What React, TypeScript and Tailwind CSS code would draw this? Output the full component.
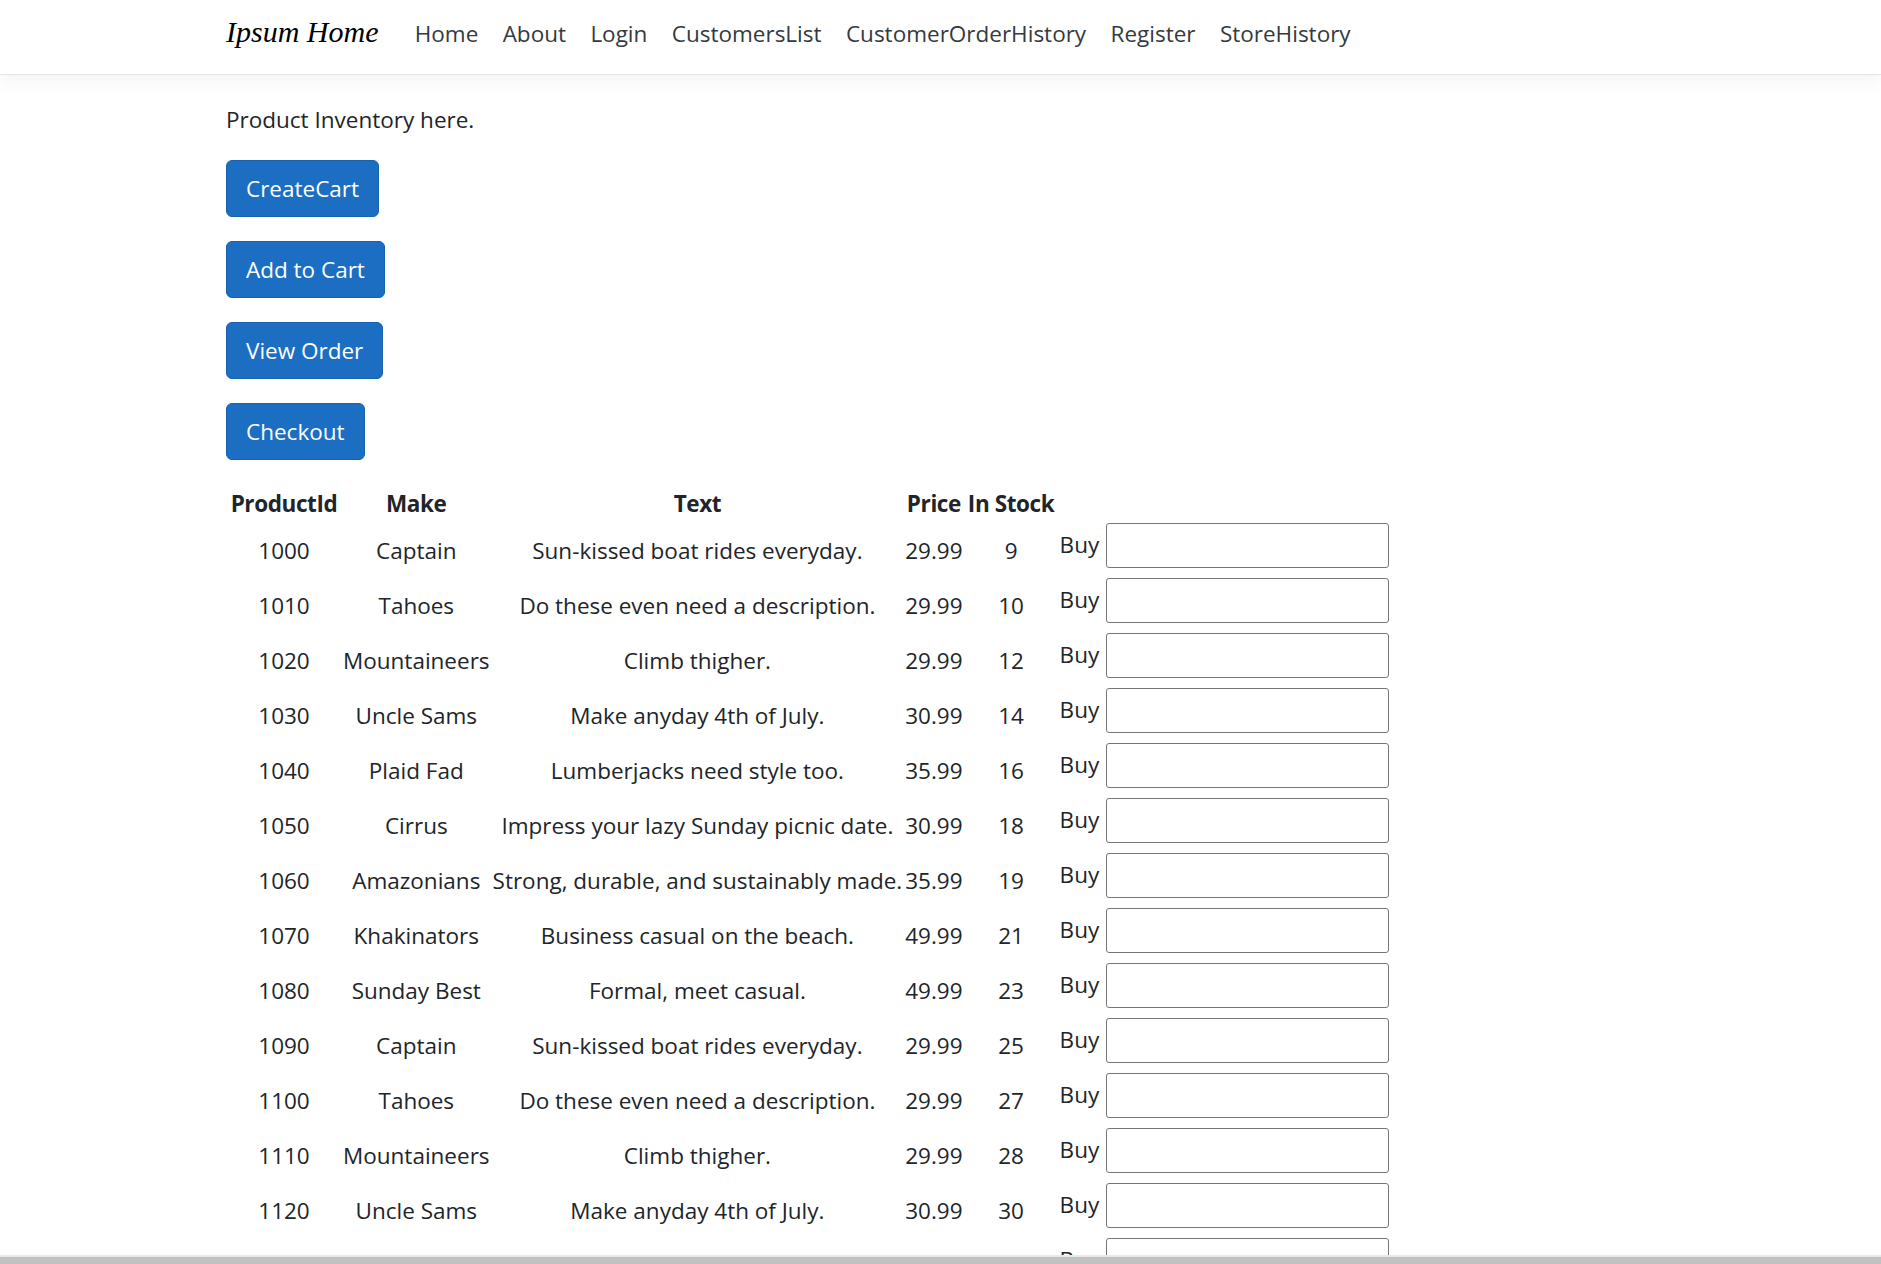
import React from "react";

type Product = { id: number; make: string; text: string; price: string; stock: number };

const PRODUCTS: Product[] = [
  { id: 1000, make: "Captain", text: "Sun-kissed boat rides everyday.", price: "29.99", stock: 9 },
  { id: 1010, make: "Tahoes", text: "Do these even need a description.", price: "29.99", stock: 10 },
  { id: 1020, make: "Mountaineers", text: "Climb thigher.", price: "29.99", stock: 12 },
  { id: 1030, make: "Uncle Sams", text: "Make anyday 4th of July.", price: "30.99", stock: 14 },
  { id: 1040, make: "Plaid Fad", text: "Lumberjacks need style too.", price: "35.99", stock: 16 },
  { id: 1050, make: "Cirrus", text: "Impress your lazy Sunday picnic date.", price: "30.99", stock: 18 },
  { id: 1060, make: "Amazonians", text: "Strong, durable, and sustainably made.", price: "35.99", stock: 19 },
  { id: 1070, make: "Khakinators", text: "Business casual on the beach.", price: "49.99", stock: 21 },
  { id: 1080, make: "Sunday Best", text: "Formal, meet casual.", price: "49.99", stock: 23 },
  { id: 1090, make: "Captain", text: "Sun-kissed boat rides everyday.", price: "29.99", stock: 25 },
  { id: 1100, make: "Tahoes", text: "Do these even need a description.", price: "29.99", stock: 27 },
  { id: 1110, make: "Mountaineers", text: "Climb thigher.", price: "29.99", stock: 28 },
  { id: 1120, make: "Uncle Sams", text: "Make anyday 4th of July.", price: "30.99", stock: 30 },
  { id: 1130, make: "Plaid Fad", text: "Lumberjacks need style too.", price: "35.99", stock: 32 },
  { id: 1140, make: "Cirrus", text: "Impress your lazy Sunday picnic date.", price: "30.99", stock: 34 },
];

const NAV = ["Home", "About", "Login", "CustomersList", "CustomerOrderHistory", "Register", "StoreHistory"];
const ACTIONS = ["CreateCart", "Add to Cart", "View Order", "Checkout"];

export default function App() {
  return (
    <div className="min-h-screen bg-white text-[#212529] text-[22.5px] leading-[36px] font-['Segoe_UI','Open_Sans',sans-serif]">
      {/* Navbar */}
      <header className="h-[75px] border-b border-[#e5e5e5] bg-white shadow-[0_6px_18px_rgba(0,0,0,0.05)]">
        <nav className="flex items-baseline pl-[226px] pt-[14px]">
          <a className="mr-[24px] text-[30px] italic text-black font-['Palatino_Linotype','Liberation_Serif',serif]">Ipsum Home</a>
          {NAV.map(n => (
            <a key={n} className="px-[12.2px] text-[#343a40]">{n}</a>
          ))}
        </nav>
      </header>

      <main className="pl-[226px] pt-[27px]">
        <p className="mb-[22px]">Product Inventory here.</p>

        {ACTIONS.map(a => (
          <div key={a} className="mb-[24px]">
            <button className="h-[57px] px-[19px] rounded-[6px] border-[1.5px] border-[#1861ac] bg-[#1b6ec2] text-white">
              {a}
            </button>
          </div>
        ))}

        {/* Inventory table */}
        <table className="-ml-[1px] border-separate border-spacing-x-[3px] border-spacing-y-0 text-center">
          <thead>
            <tr className="h-[39px] font-bold tracking-[-0.4px]">
              <th className="w-[112px] p-0 whitespace-nowrap">ProductId</th>
              <th className="w-[145px] p-0 whitespace-nowrap">Make</th>
              <th className="w-[406px] p-0 whitespace-nowrap">Text</th>
              <th className="w-[56px] p-0 whitespace-nowrap">Price</th>
              <th className="w-[91px] p-0 whitespace-nowrap">In Stock</th>
              <th className="p-0"></th>
            </tr>
          </thead>
          <tbody>
            {PRODUCTS.map(p => (
              <tr key={p.id} className="h-[55px]">
                <td className="p-0 whitespace-nowrap">{p.id}</td>
                <td className="p-0 whitespace-nowrap">{p.make}</td>
                <td className="p-0 whitespace-nowrap">{p.text}</td>
                <td className="p-0 whitespace-nowrap">{p.price}</td>
                <td className="p-0 whitespace-nowrap">{p.stock}</td>
                <td className="p-0 align-top">
                  <div className="flex items-center gap-[7px]">
                    <span className="-mt-[1px]">Buy</span>
                    <input className="h-[45px] w-[283px] rounded-[3px] border-[1.5px] border-[#767676] bg-white" />
                  </div>
                </td>
              </tr>
            ))}
          </tbody>
        </table>
      </main>

      {/* bottom scrollbar strip */}
      <div className="fixed bottom-0 left-0 right-0 h-[9px] border-t-2 border-[#e9e9e9] bg-[#c1c1c1]"></div>
    </div>
  );
}
